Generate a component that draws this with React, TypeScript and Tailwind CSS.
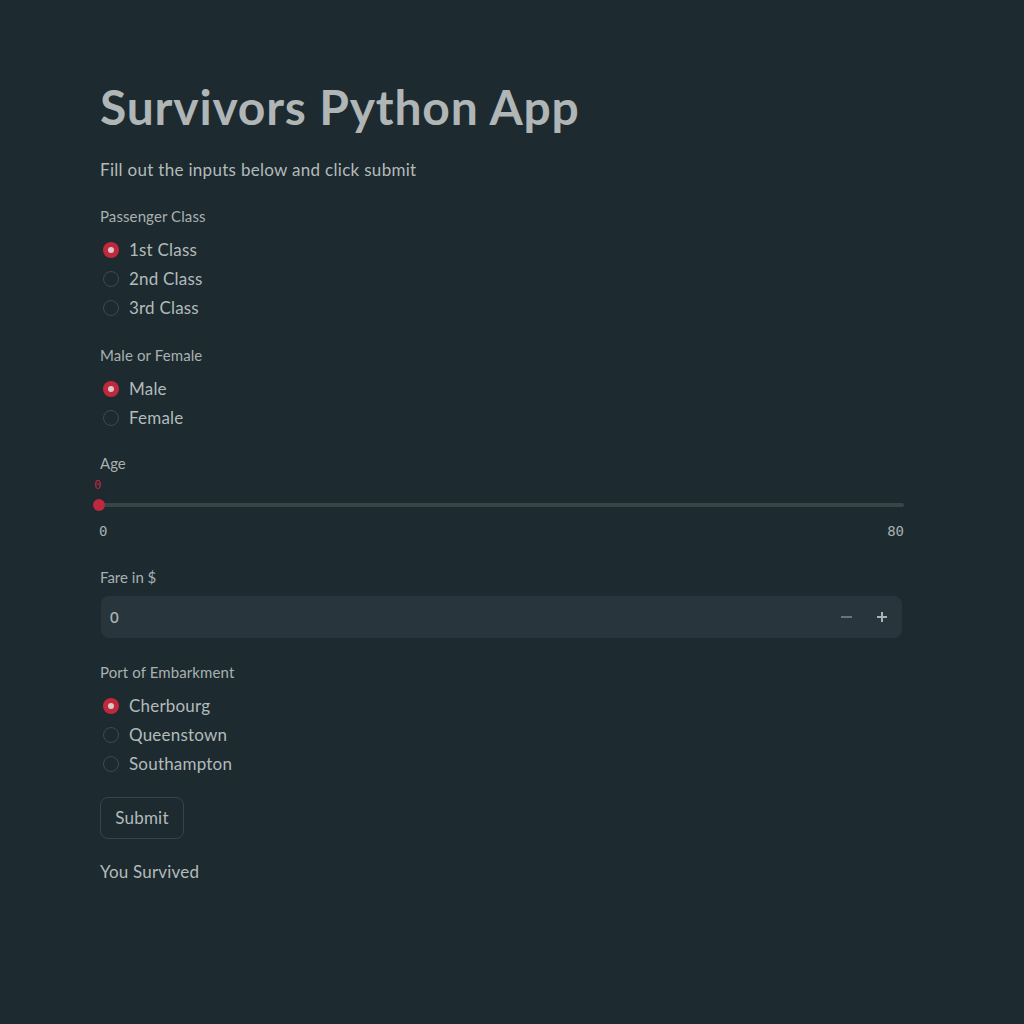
import { useState } from "react";

const font = { fontFamily: "Lato, 'Noto Sans', sans-serif" };
const mono = { fontFamily: "'DejaVu Sans Mono', 'Liberation Mono', monospace" };

function RadioGroup({
  label,
  options,
  value,
  onChange,
  className,
}: {
  label: string;
  options: string[];
  value: string;
  onChange: (v: string) => void;
  className?: string;
}) {
  return (
    <div className={className}>
      <p className="h-5 text-[15px] leading-5 tracking-[0.1px] text-[#a9b1b0]">{label}</p>
      <div className="mt-[9px] flex flex-col">
        {options.map((o) => {
          const checked = o === value;
          return (
            <button
              key={o}
              onClick={() => onChange(o)}
              className="flex h-[29px] items-center gap-[10px] text-left"
            >
              {checked ? (
                <span className="ml-[3px] flex h-4 w-4 items-center justify-center rounded-full bg-[#c0283e]">
                  <span className="h-[6px] w-[6px] rounded-full bg-[#d9c9cc]" />
                </span>
              ) : (
                <span className="ml-[3px] h-4 w-4 rounded-full border border-[#3d4b50]" />
              )}
              <span className="text-[17px] leading-6 tracking-[0.2px] text-[#b3bbba]">{o}</span>
            </button>
          );
        })}
      </div>
    </div>
  );
}

export default function App() {
  const [pclass, setPclass] = useState("1st Class");
  const [sex, setSex] = useState("Male");
  const [port, setPort] = useState("Cherbourg");
  const [fare, setFare] = useState(0);

  return (
    <main className="min-h-screen bg-[#1d2a30] px-[100px] pt-[80px]" style={font}>
      <div className="w-[804px]">
        <h1 className="h-[54px] text-[48px] font-bold leading-[54px] tracking-[0.8px] text-[#b0b5b6]">
          Survivors Python App
        </h1>
        <p className="mt-6 text-[17px] leading-6 tracking-[0.3px] text-[#b3bbba]">
          Fill out the inputs below and click submit
        </p>

        <RadioGroup
          className="mt-6"
          label="Passenger Class"
          options={["1st Class", "2nd Class", "3rd Class"]}
          value={pclass}
          onChange={setPclass}
        />

        <RadioGroup
          className="mt-[23px]"
          label="Male or Female"
          options={["Male", "Female"]}
          value={sex}
          onChange={setSex}
        />

        <div className="mt-[21px]">
          <p className="h-5 text-[15px] leading-5 text-[#a9b1b0]">Age</p>
          <div className="relative mt-1 h-4">
            <span
              className="absolute left-[-6px] top-0 text-[12px] leading-4 text-[#c0283e]"
              style={mono}
            >
              0
            </span>
          </div>
          <div className="relative mt-[4px] flex h-4 items-center">
            <div className="h-1 w-full rounded-full bg-[#364547]" />
            <span className="absolute left-[-7px] top-[2px] h-3 w-3 rounded-full bg-[#c0283e]" />
          </div>
          <div
            className="mt-[8px] flex h-5 items-center justify-between text-[14px] leading-5 text-[#a9b1b0]"
            style={mono}
          >
            <span className="-ml-[1px]">0</span>
            <span>80</span>
          </div>
        </div>

        <div className="mt-[26px]">
          <p className="h-5 text-[15px] leading-5 text-[#a9b1b0]">Fare in $</p>
          <div className="ml-px mt-[9px] flex h-[42px] w-[801px] items-center rounded-lg bg-[#29353d] pl-[9px] pr-[4px]">
            <span className="flex-1 text-[15px] font-semibold text-[#a9b4b6]">{fare}</span>
            <button
              onClick={() => setFare(Math.max(0, fare - 1))}
              className="flex h-8 w-8 items-center justify-center text-[#687479]"
            >
              <svg width="11" height="12" viewBox="0 0 11 12">
                <rect x="0" y="5" width="11" height="2" fill="currentColor" />
              </svg>
            </button>
            <button
              onClick={() => setFare(fare + 1)}
              className="ml-[4px] flex h-8 w-8 items-center justify-center text-[#a9b4b6]"
            >
              <svg width="10" height="10" viewBox="0 0 10 10">
                <rect x="0" y="4" width="10" height="2" fill="currentColor" />
                <rect x="4" y="0" width="2" height="10" fill="currentColor" />
              </svg>
            </button>
          </div>
        </div>

        <RadioGroup
          className="mt-6"
          label="Port of Embarkment"
          options={["Cherbourg", "Queenstown", "Southampton"]}
          value={port}
          onChange={setPort}
        />

        <button className="mt-[19px] h-[42px] w-[84px] rounded-lg border border-[#37454b] text-[17px] tracking-[0.2px] text-[#b3bbba]">
          Submit
        </button>

        <p className="mt-[21px] text-[17px] leading-6 tracking-[0.2px] text-[#b3bbba]">You Survived</p>
      </div>
    </main>
  );
}
